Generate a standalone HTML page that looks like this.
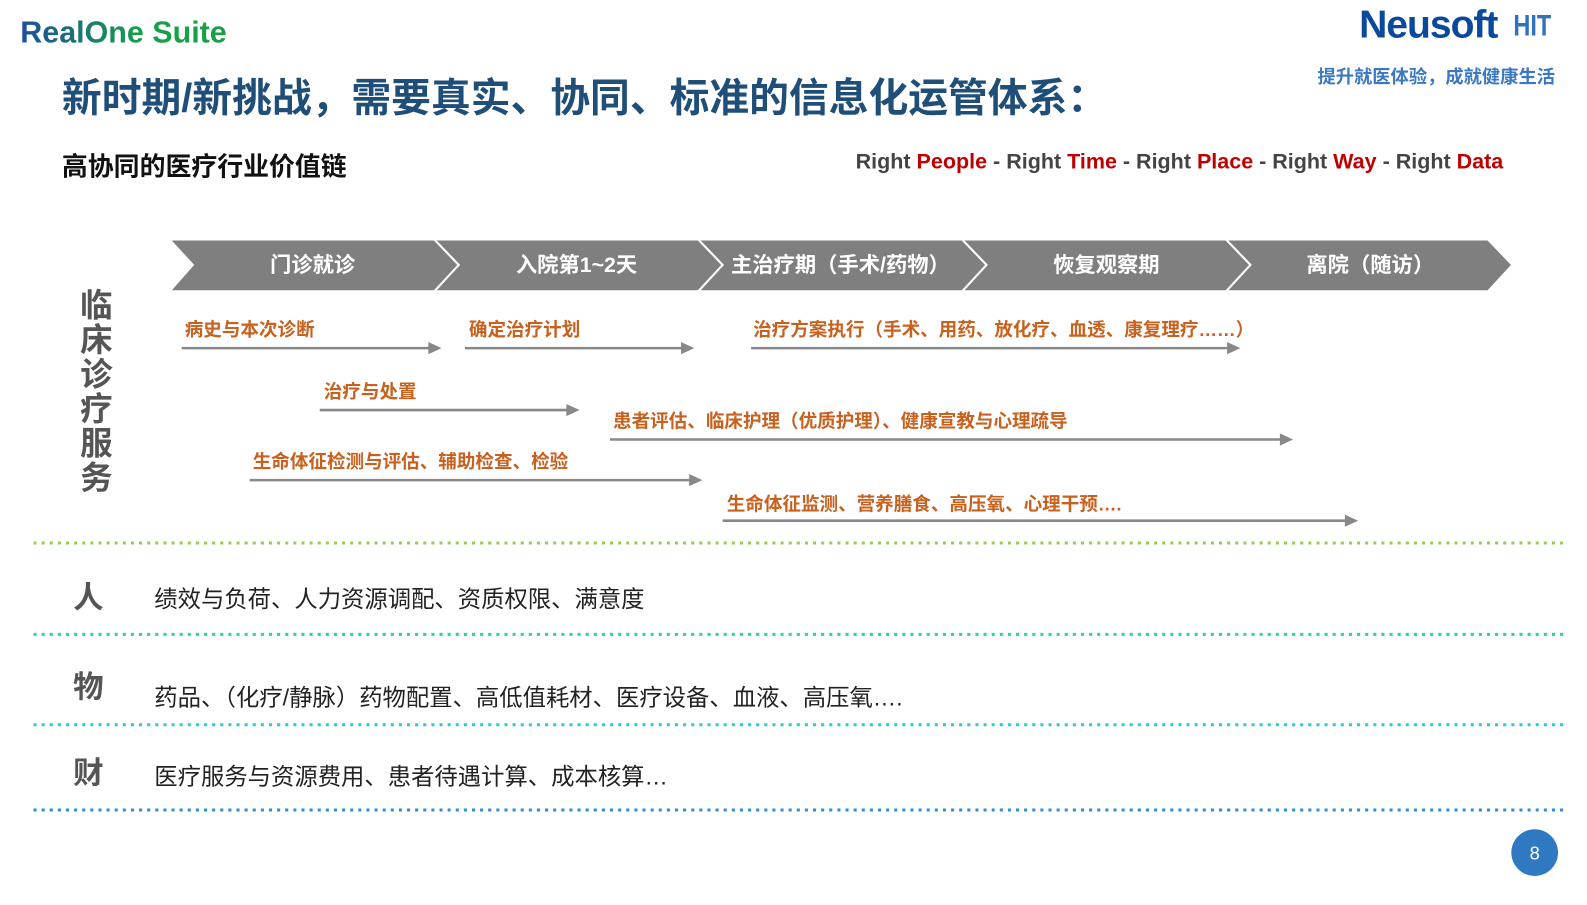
<!DOCTYPE html>
<html><head><meta charset="utf-8"><style>
body{margin:0;width:1587px;height:892px;background:#fff;position:relative;overflow:hidden;font-family:"Liberation Sans","Noto Sans CJK SC",sans-serif}
#w{position:absolute;left:0;top:0;width:1587px;height:892px;transform:scale(1.015);transform-origin:0 0}
.a{position:absolute;white-space:nowrap}
.o{color:#c8601e;font-weight:bold;font-size:18.3px}
.k{color:#222;font-size:23px}
.h{color:#555;font-weight:bold;font-size:30px}
</style></head><body><div id="w">
<div class="a" style="left:20px;top:16px;font-size:30px;font-weight:bold;background:linear-gradient(90deg,#1c4f9c,#17a048 60%);-webkit-background-clip:text;color:transparent">RealOne Suite</div>
<div class="a" style="left:1339px;top:3px;font-size:38.5px;font-weight:bold;color:#0b4a9a;letter-spacing:-1px">Neusoft</div>
<div class="a" style="left:1491px;top:10px;font-size:29px;font-weight:bold;color:#2e72c0;transform:scaleX(0.8);transform-origin:0 0">HIT</div>
<div class="a" style="left:1298px;top:62px;font-size:18px;font-weight:bold;color:#3a78c4">提升就医体验，成就健康生活</div>
<div class="a" style="left:61px;top:66px;font-size:39.2px;font-weight:bold;color:#1f4e79">新时期/新挑战，需要真实、协同、标准的信息化运管体系：</div>
<div class="a" style="left:61px;top:144px;font-size:25.5px;font-weight:bold;color:#111">高协同的医疗行业价值链</div>
<div class="a" style="left:843px;top:148px;font-size:21.2px;font-weight:bold;color:#444">Right <span style="color:#c00000">People</span> - Right <span style="color:#c00000">Time</span> - Right <span style="color:#c00000">Place</span> - Right <span style="color:#c00000">Way</span> - Right <span style="color:#c00000">Data</span></div>
<svg class="a" style="left:0;top:0" width="1587" height="892">
<g fill="#7f7f7f" stroke="#fff" stroke-width="2">
<polygon points="167,236 428,236 452,261 428,287 167,287 190,261"/>
<polygon points="428,236 688,236 712,261 688,287 428,287 452,261"/>
<polygon points="688,236 948,236 972,261 948,287 688,287 712,261"/>
<polygon points="948,236 1208,236 1232,261 1208,287 948,287 972,261"/>
<polygon points="1208,236 1466,236 1490,261 1466,287 1208,287 1232,261"/>
</g>
<g fill="#fff" font-size="21" font-weight="bold" text-anchor="middle" font-family="Liberation Sans,Noto Sans CJK SC,sans-serif">
<text x="308" y="268">门诊就诊</text><text x="568" y="268">入院第1~2天</text><text x="828" y="268">主治疗期（手术/药物）</text><text x="1090" y="268">恢复观察期</text><text x="1350" y="268">离院（随访）</text>
</g>
<g stroke="#888" stroke-width="2.5" fill="#888">
<line x1="179" y1="343" x2="425" y2="343"/><polygon points="435,343 422,337 422,349" stroke="none"/>
<line x1="458" y1="343" x2="674" y2="343"/><polygon points="684,343 671,337 671,349" stroke="none"/>
<line x1="740" y1="343" x2="1212" y2="343"/><polygon points="1222,343 1209,337 1209,349" stroke="none"/>
<line x1="315" y1="404" x2="561" y2="404"/><polygon points="571,404 558,398 558,410" stroke="none"/>
<line x1="601" y1="433" x2="1264" y2="433"/><polygon points="1274,433 1261,427 1261,439" stroke="none"/>
<line x1="246" y1="473" x2="682" y2="473"/><polygon points="692,473 679,467 679,479" stroke="none"/>
<line x1="712" y1="513" x2="1328" y2="513"/><polygon points="1338,513 1325,507 1325,519" stroke="none"/>
</g>
<g stroke-width="3" stroke-dasharray="3 5">
<line x1="33" y1="535" x2="1542" y2="535" stroke="#92d050"/>
<line x1="33" y1="625" x2="1542" y2="625" stroke="#2ed19a"/>
<line x1="33" y1="714" x2="1542" y2="714" stroke="#2bcad8"/>
<line x1="33" y1="798" x2="1542" y2="798" stroke="#2e8fd8"/>
</g>
<circle cx="1512" cy="840" r="23" fill="#2f78c2"/>
<text x="1512" y="847" fill="#fff" font-size="18" text-anchor="middle" font-family="Liberation Sans,sans-serif">8</text>
</svg>
<div class="a o" style="left:182px;top:311px">病史与本次诊断</div>
<div class="a o" style="left:462px;top:311px">确定治疗计划</div>
<div class="a o" style="left:742px;top:311px">治疗方案执行（手术、用药、放化疗、血透、康复理疗……）</div>
<div class="a o" style="left:319px;top:372px">治疗与处置</div>
<div class="a o" style="left:604px;top:401px">患者评估、临床护理（优质护理）、健康宣教与心理疏导</div>
<div class="a o" style="left:249px;top:441px">生命体征检测与评估、辅助检查、检验</div>
<div class="a o" style="left:716px;top:483px">生命体征监测、营养膳食、高压氧、心理干预….</div>
<div class="a" style="left:79px;top:284px;width:36px;font-size:32px;font-weight:bold;color:#555;line-height:34px;white-space:normal">临床诊疗服务</div>
<div class="a h" style="left:72px;top:564px">人</div>
<div class="a h" style="left:72px;top:652px">物</div>
<div class="a h" style="left:72px;top:737px">财</div>
<div class="a k" style="left:152px;top:571px">绩效与负荷、人力资源调配、资质权限、满意度</div>
<div class="a k" style="left:152px;top:668px">药品、（化疗/静脉）药物配置、高低值耗材、医疗设备、血液、高压氧….</div>
<div class="a k" style="left:152px;top:746px">医疗服务与资源费用、患者待遇计算、成本核算…</div>
</div></body></html>
